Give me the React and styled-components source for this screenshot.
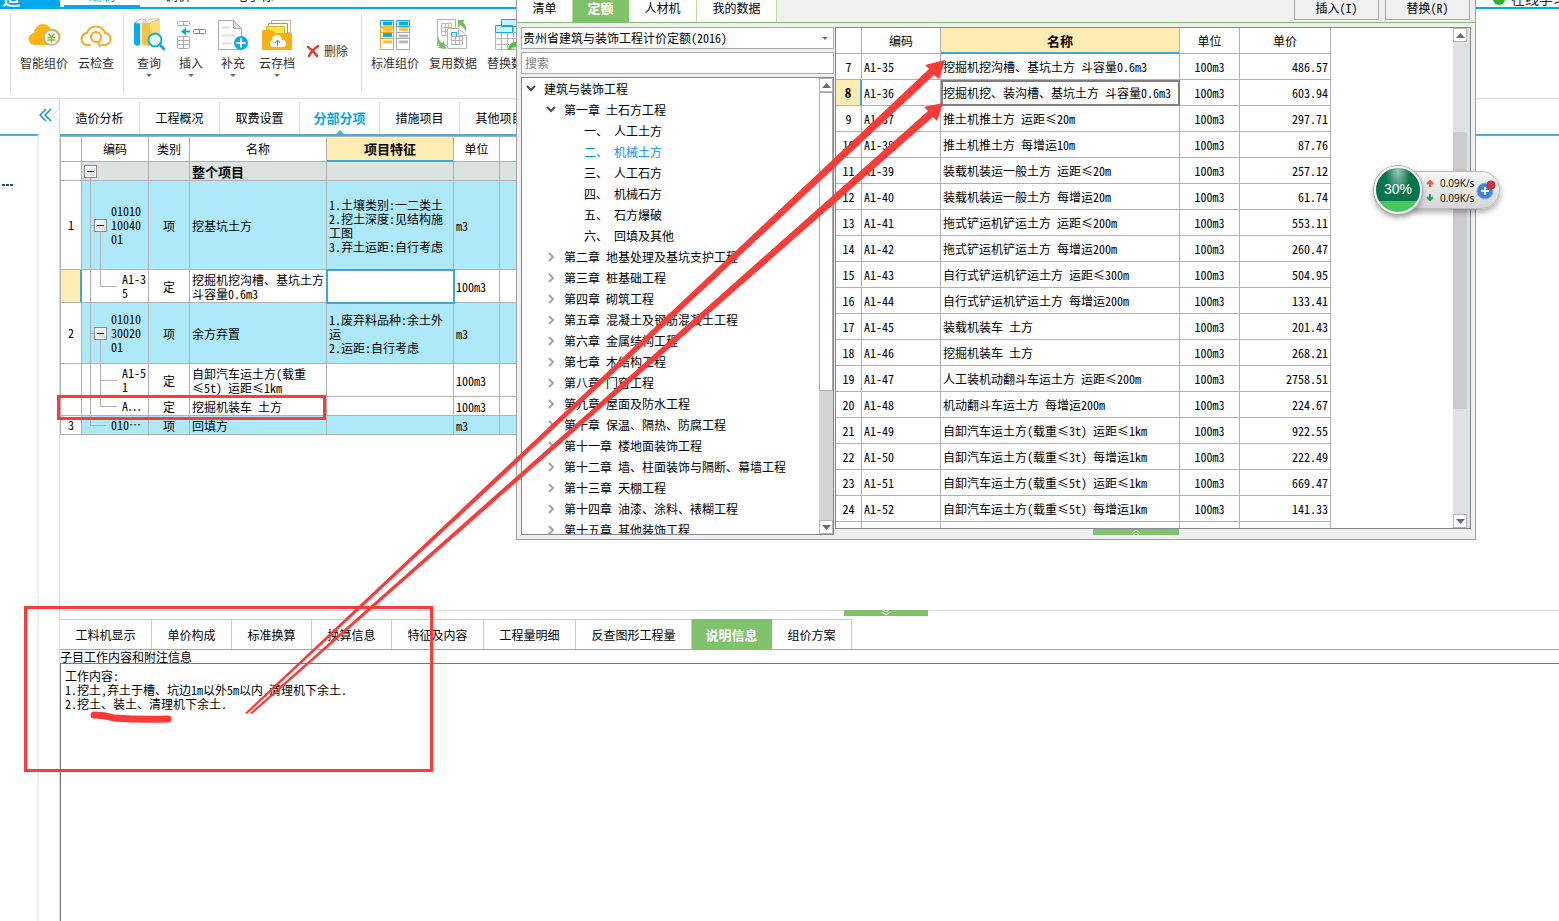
import { useState } from 'react';
import styled, { createGlobalStyle, css } from 'styled-components';

const colors = {
  blue: '#00a8ec',
  line: '#41b2e0',
  select: '#3fa7d6',
  green: '#80c269',
  lightGreen: '#b4e29c',
  grid: '#b0b0b0',
  yellow: '#ffecb3',
  item: '#aee9fa',
  mark: '#fc3a37',
};

const mainTabs = ['造价分析', '工程概况', '取费设置', '分部分项', '措施项目', '其他项目'];

const billRows = [
  { kind: 'root', no: '', code: '', type: '', name: '整个项目', feature: '', unit: '', height: 19 },
  {
    kind: 'item',
    no: '1',
    code: '01010\n10040\n01',
    type: '项',
    name: '挖基坑土方',
    feature: '1.土壤类别:一二类土\n2.挖土深度:见结构施\n工图\n3.弃土运距:自行考虑',
    unit: 'm3',
    height: 89,
  },
  {
    kind: 'leafEnd',
    no: '',
    code: 'A1-3\n5',
    type: '定',
    name: '挖掘机挖沟槽、基坑土方\n斗容量0.6m3',
    feature: '',
    unit: '100m3',
    height: 33,
    current: true,
  },
  {
    kind: 'item',
    no: '2',
    code: '01010\n30020\n01',
    type: '项',
    name: '余方弃置',
    feature: '1.废弃料品种:余土外\n运\n2.运距:自行考虑',
    unit: 'm3',
    height: 61,
  },
  {
    kind: 'leaf',
    no: '',
    code: 'A1-5\n1',
    type: '定',
    name: '自卸汽车运土方(载重\n≤5t) 运距≤1km',
    feature: '',
    unit: '100m3',
    height: 33,
  },
  { kind: 'leafEnd', no: '', code: 'A⋯', type: '定', name: '挖掘机装车 土方', feature: '', unit: '100m3', height: 19 },
  { kind: 'itemEnd', no: '3', code: '010⋯', type: '项', name: '回填方', feature: '', unit: 'm3', height: 19 },
];

const tree = [
  { level: 0, text: '建筑与装饰工程', open: true },
  { level: 1, text: '第一章 土石方工程', open: true },
  { level: 2, text: '一、 人工土方' },
  { level: 2, text: '二、 机械土方', active: true },
  { level: 2, text: '三、 人工石方' },
  { level: 2, text: '四、 机械石方' },
  { level: 2, text: '五、 石方爆破' },
  { level: 2, text: '六、 回填及其他' },
  { level: 1, text: '第二章 地基处理及基坑支护工程' },
  { level: 1, text: '第三章 桩基础工程' },
  { level: 1, text: '第四章 砌筑工程' },
  { level: 1, text: '第五章 混凝土及钢筋混凝土工程' },
  { level: 1, text: '第六章 金属结构工程' },
  { level: 1, text: '第七章 木结构工程' },
  { level: 1, text: '第八章 门窗工程' },
  { level: 1, text: '第九章 屋面及防水工程' },
  { level: 1, text: '第十章 保温、隔热、防腐工程' },
  { level: 1, text: '第十一章 楼地面装饰工程' },
  { level: 1, text: '第十二章 墙、柱面装饰与隔断、幕墙工程' },
  { level: 1, text: '第十三章 天棚工程' },
  { level: 1, text: '第十四章 油漆、涂料、裱糊工程' },
  { level: 1, text: '第十五章 其他装饰工程' },
];

const quotas = [
  [7, 'A1-35', '挖掘机挖沟槽、基坑土方 斗容量0.6m3', '486.57'],
  [8, 'A1-36', '挖掘机挖、装沟槽、基坑土方 斗容量0.6m3', '603.94'],
  [9, 'A1-37', '推土机推土方 运距≤20m', '297.71'],
  [10, 'A1-38', '推土机推土方 每增运10m', '87.76'],
  [11, 'A1-39', '装载机装运一般土方 运距≤20m', '257.12'],
  [12, 'A1-40', '装载机装运一般土方 每增运20m', '61.74'],
  [13, 'A1-41', '拖式铲运机铲运土方 运距≤200m', '553.11'],
  [14, 'A1-42', '拖式铲运机铲运土方 每增运200m', '260.47'],
  [15, 'A1-43', '自行式铲运机铲运土方 运距≤300m', '504.95'],
  [16, 'A1-44', '自行式铲运机铲运土方 每增运200m', '133.41'],
  [17, 'A1-45', '装载机装车 土方', '201.43'],
  [18, 'A1-46', '挖掘机装车 土方', '268.21'],
  [19, 'A1-47', '人工装机动翻斗车运土方 运距≤200m', '2758.51'],
  [20, 'A1-48', '机动翻斗车运土方 每增运200m', '224.67'],
  [21, 'A1-49', '自卸汽车运土方(载重≤3t) 运距≤1km', '922.55'],
  [22, 'A1-50', '自卸汽车运土方(载重≤3t) 每增运1km', '222.49'],
  [23, 'A1-51', '自卸汽车运土方(载重≤5t) 运距≤1km', '669.47'],
  [24, 'A1-52', '自卸汽车运土方(载重≤5t) 每增运1km', '141.33'],
];

const detailTabs = [
  ['工料机显示', 92],
  ['单价构成', 80],
  ['标准换算', 80],
  ['换算信息', 80],
  ['特征及内容', 92],
  ['工程量明细', 92],
  ['反查图形工程量', 116],
  ['说明信息', 80],
  ['组价方案', 80],
];

const note = '工作内容:\n1.挖土,弃土于槽、坑边1m以外5m以内,清理机下余土.\n2.挖土、装土、清理机下余土.';

/* ---------- icons ---------- */

const SmartPriceIcon = () => (
  <svg width="34" height="34" viewBox="0 0 34 34">
    <path d="M8 27a6 6 0 0 1-1-12 9 9 0 0 1 17-4 7 7 0 0 1 3 16z" fill="#fdb515" />
    <circle cx="24.500" cy="19.500" r="7.500" fill="#fff" stroke="#b5b0a4" strokeWidth="1.500" />
    <path d="M21.500 15.500l3 3.500 3-3.500M20.500 19.500h8M20.500 22h8M24.500 19v5.500" fill="none" stroke="#7fc31c" strokeWidth="1.500" />
  </svg>
);

const CloudCheckIcon = () => (
  <svg width="34" height="34" viewBox="0 0 34 34" fill="none" stroke="#fca51f" strokeWidth="2">
    <path d="M11 27H9a6 6 0 0 1-1-12 9.500 9.500 0 0 1 18 0 6 6 0 0 1-1 12h-2" strokeLinecap="round" />
    <circle cx="17" cy="19" r="5" />
    <path d="M19 24l2 4" strokeLinecap="round" />
  </svg>
);

const QueryIcon = () => (
  <svg width="34" height="34" viewBox="0 0 34 34">
    <path d="M2 5l6-4v26l-3 1-3-2z" fill="#09aee9" />
    <path d="M3 5l5-4 6 1-5 4z" fill="#fff" stroke="#7b9ead" strokeWidth=".7" />
    <path d="M10 6l8-1v23l-8-1z" fill="#f6c348" />
    <path d="M18 5l10-4v24l-10 3z" fill="#ffdc70" />
    <path d="M11 6l7-5h9l-9 4z" fill="#fff" stroke="#bda76c" strokeWidth=".7" />
    <circle cx="23" cy="22" r="6.500" fill="#e4f7fd" stroke="#13a9e2" strokeWidth="2" />
    <path d="M28 27l4 4" stroke="#13a9e2" strokeWidth="3" strokeLinecap="round" />
  </svg>
);

const InsertIcon = () => (
  <svg width="34" height="34" viewBox="0 0 34 34" fill="none" stroke="#aaa">
    <rect x="3.500" y="3.500" width="12" height="4" rx="1" />
    <path d="M9.500 3.500v4" />
    <rect x="3.500" y="18.500" width="12" height="12" rx="1" />
    <path d="M3.500 22.500h12M3.500 26.500h12M9.500 18.500v12" />
    <rect x="19.500" y="11.500" width="12" height="4" rx="1" stroke="#12a9e5" />
    <path d="M25.500 11.500v4" stroke="#12a9e5" />
    <path d="M7 13.500l5-4v3h4v2h-4v3z" fill="#00a8ec" stroke="none" />
  </svg>
);

const AppendIcon = () => (
  <svg width="34" height="34" viewBox="0 0 34 34">
    <path d="M2.500 2.500h15l8 8v21h-23z" fill="#fff" stroke="#aaa" />
    <path d="M17.500 2.500v8h8z" fill="#ddd" stroke="#aaa" />
    <path d="M6 9.500h8M6 17.500h14M6 25.500h10" stroke="#e0e0e0" strokeWidth="2" />
    <circle cx="25" cy="25" r="7" fill="#08a9ed" />
    <path d="M20.500 25h9M25 20.500v9" stroke="#fff" strokeWidth="2" />
  </svg>
);

const CloudFolderIcon = () => (
  <svg width="34" height="34" viewBox="0 0 34 34">
    <path d="M11.500 2.500h19v12h-19z" fill="#fff" stroke="#c5b79b" />
    <path d="M8.500 5.500h19v10h-19z" fill="#fff" stroke="#8cae3b" />
    <path d="M6.500 8.500h18v9h-18z" fill="#ffe54b" stroke="#e3ad22" />
    <path d="M2 13a1 1 0 0 1 1-1h9l3 3h16a1 1 0 0 1 1 1v15a1 1 0 0 1-1 1H3a1 1 0 0 1-1-1z" fill="#fbaf14" />
    <path d="M12 29a4 4 0 0 1 0-7 5 5 0 0 1 10 0 3.500 3.500 0 0 1 1 7z" fill="#fff" />
    <path d="M17.500 28v-5M15 25l2.500-3 2.500 3" fill="none" stroke="#25a143" />
  </svg>
);

const StandardIcon = () => (
  <svg width="34" height="34" viewBox="0 0 34 34" fill="none">
    <path d="M2.500 2.500h13v6h-13z" stroke="#12a9e5" />
    <path d="M2.500 9v22.500h13V9" stroke="#eca52b" />
    <path d="M5 5.500h9M5 17h9" stroke="#09aee9" strokeWidth="4" />
    <path d="M3 9.500h12M5 12h9M5 24h9" stroke="#ffc132" strokeWidth="3" />
    <path d="M2.500 14.500h13M2.500 20.500h13" stroke="#eca52b" />
    <path d="M18.500 2.500h13v6h-13z" stroke="#12a9e5" />
    <path d="M18.500 9v22.500h13V9" stroke="#aaa" />
    <path d="M21 5.500h9" stroke="#09aee9" strokeWidth="4" />
    <path d="M21 11h9" stroke="#ffc132" strokeWidth="4" />
    <path d="M21 18h9M21 24h9" stroke="#b6b6b6" strokeWidth="3" />
    <path d="M18.500 14.500h13M18.500 20.500h13" stroke="#aaa" />
  </svg>
);

const ReuseIcon = () => (
  <svg width="34" height="34" viewBox="0 0 34 34" fill="none">
    <path d="M1.500 1.500h18v26h-18z" fill="#fff" stroke="#b3b3b3" />
    <path d="M5.500 5.500h10v12h-10zM5.500 9.500h10M5.500 13.500h10M9.500 5.500v12M12.500 5.500v12" stroke="#efb64a" />
    <path d="M11.500 10.500h11l8 7v13h-19z" fill="#fff" stroke="#b3b3b3" />
    <path d="M22.500 10.500v7h8" stroke="#b3b3b3" />
    <path d="M15.500 14.500h5v4h-5z" fill="#c6effc" stroke="#12a9e5" />
    <path d="M15.500 18.500h11v8h-11zM15.500 22.500h11M19.500 18.500v8M23.500 18.500v8" stroke="#b3b3b3" />
    <path d="M22 2h7l-2 2q4 4 3 10-2-5-6-7l-2 3z" fill="#78bd62" />
    <path d="M2 18q1 5 4 7l2-2 2 8-8-1 2-2q-4-4-2-10z" fill="#78bd62" />
  </svg>
);

const ReplaceIcon = () => (
  <svg width="34" height="34" viewBox="0 0 34 34" fill="none">
    <path d="M1.500 8.500h28v23h-28zM1.500 14.500h28M1.500 20.500h28M1.500 26.500h28M7.500 8.500v23M13.500 8.500v23M19.500 8.500v23" fill="#fff" stroke="#b3b3b3" />
    <path d="M7.500 1.500h22v7h-22zM1.500 7.500h17v7h-17z" fill="#c6f2fd" stroke="#12a9e5" />
    <path d="M14 32q1-9 9-8v-3l8 6-8 6v-4q-5-1-6 3z" fill="#4cc52e" />
  </svg>
);

const DeleteIcon = () => (
  <svg width="14" height="14" viewBox="0 0 14 14">
    <path d="M2 3q5 3 9 9M12 2q-6 4-9 10" fill="none" stroke="#e8372c" strokeWidth="2.500" strokeLinecap="round" />
  </svg>
);

const Triangle = ({ up }) => (
  <svg width="9" height="5" viewBox="0 0 9 5">
    <path d={up ? 'M0 5L4.500 0 9 5z' : 'M0 0L4.500 5 9 0z'} fill="#666b7a" />
  </svg>
);

const Caret = () => (
  <svg width="6" height="3" viewBox="0 0 6 3">
    <path d="M0 0h6L3 3z" fill="#6b6f7c" />
  </svg>
);

const Chevron = ({ open }) => (
  <svg width="10" height="10" viewBox="0 0 10 10" fill="none" strokeWidth="2">
    {open ? <path d="M1 2l4 4 4-4" stroke="#4a4a4a" /> : <path d="M3 1l4 4-4 4" stroke="#a3a3a3" />}
  </svg>
);

const DoubleChevron = ({ up }) => (
  <svg width="10" height="6" viewBox="0 0 10 6" fill="none" stroke="#e8f6e2">
    <path d={up ? 'M1 4l4-3 4 3M2 6l3-2 3 2' : 'M1 2l4 3 4-3M2 0l3 2 3-2'} />
  </svg>
);

const RateArrow = ({ down }) => (
  <svg width="8" height="8" viewBox="0 0 8 8" fill="none" strokeWidth="2">
    {down ? <path d="M4 0v6M1 3l3 3 3-3" stroke="#22a052" /> : <path d="M4 8V2M1 5l3-3 3 3" stroke="#e9553b" />}
  </svg>
);

/* ---------- pieces ---------- */

const Ribbon = () => (
  <RibbonBar>
    <RibbonGroup $gap={10}>
      <Tool $width={48}><SmartPriceIcon />智能组价</Tool>
      <Tool $width={36}><CloudCheckIcon />云检查</Tool>
    </RibbonGroup>
    <RibbonGroup $gap={6}>
      <Tool $width={36}><QueryIcon />查询<Caret /></Tool>
      <Tool $width={36}><InsertIcon />插入<Caret /></Tool>
      <Tool $width={36}><AppendIcon />补充<Caret /></Tool>
      <Tool $width={40}><CloudFolderIcon />云存档<Caret /></Tool>
      <InlineTool><DeleteIcon />删除</InlineTool>
    </RibbonGroup>
    <RibbonGroup $gap={10}>
      <Tool $width={48}><StandardIcon />标准组价</Tool>
      <Tool $width={48}><ReuseIcon />复用数据</Tool>
      <Tool $width={48}><ReplaceIcon />替换数据</Tool>
    </RibbonGroup>
  </RibbonBar>
);

const BillTable = () => (
  <Grid $width={560}>
    <colgroup>
      <col width="22" />
      <col width="67" />
      <col width="41" />
      <col width="137" />
      <col width="127" />
      <col width="46" />
      <col />
    </colgroup>
    <thead>
      <Row $height={26}>
        <Head />
        <Head>编码</Head>
        <Head>类别</Head>
        <Head>名称</Head>
        <Head $active>项目特征</Head>
        <Head>单位</Head>
        <Head />
      </Row>
    </thead>
    <tbody>
      {billRows.map((row, index) => (
        <Row key={index} $height={row.height} $kind={row.kind}>
          <NumberCell $current={row.current}>{row.no}</NumberCell>
          <CodeCell $kind={row.kind}>
            <Code $kind={row.kind}>
              {(row.kind === 'root' || row.kind === 'item') && <Expander type="button" aria-label="折叠" />}
              {row.code}
            </Code>
          </CodeCell>
          <BillCell $center>{row.type}</BillCell>
          <BillCell $bold={row.kind === 'root'}>{row.name}</BillCell>
          <BillCell $focus={row.current}>{row.feature}</BillCell>
          <BillCell>{row.unit}</BillCell>
          <BillCell />
        </Row>
      ))}
    </tbody>
  </Grid>
);

const QuotaTable = () => (
  <Grid $width={495} $inner>
    <colgroup>
      <col width="26" />
      <col width="79" />
      <col width="239" />
      <col width="60" />
      <col width="91" />
    </colgroup>
    <thead>
      <Row $height={26}>
        <Head />
        <Head>编码</Head>
        <Head $active>名称</Head>
        <Head>单位</Head>
        <Head>单价</Head>
      </Row>
    </thead>
    <tbody>
      {quotas.map(([no, code, name, price]) => (
        <Row key={no} $height={26}>
          <NumberCell $current={no === 8}>{no}</NumberCell>
          <Cell>{code}</Cell>
          <Cell $picked={no === 8}>{name}</Cell>
          <Cell $center>100m3</Cell>
          <Cell $right>{price}</Cell>
        </Row>
      ))}
      <Row $height={26}>
        <Cell />
        <Cell />
        <Cell />
        <Cell />
        <Cell />
      </Row>
    </tbody>
  </Grid>
);

const QuotaDialog = () => {
  const [keyword, setKeyword] = useState('');

  return (
    <Dialog role="dialog" aria-label="查询">
      <DialogBar>
        <DialogTab $width={56}>清单</DialogTab>
        <DialogTab $width={56} $active>定额</DialogTab>
        <DialogTab $width={68}>人材机</DialogTab>
        <DialogTab $width={80}>我的数据</DialogTab>
        <DialogActions>
          <DialogButton type="button">插入(I)</DialogButton>
          <DialogButton type="button">替换(R)</DialogButton>
        </DialogActions>
      </DialogBar>
      <DialogBody>
        <Library>
          <SelectBox>
            <select aria-label="定额库">
              <option>贵州省建筑与装饰工程计价定额(2016)</option>
            </select>
            <Caret />
          </SelectBox>
          <SearchInput
            type="text"
            aria-label="搜索"
            placeholder="搜索"
            value={keyword}
            onChange={event => setKeyword(event.currentTarget.value)}
          />
          <TreeBox>
            <TreeList>
              {tree.map(node => (
                <TreeItem key={node.text} $level={node.level} $active={node.active}>
                  {node.level < 2 && <Chevron open={node.open} />}
                  {node.text}
                </TreeItem>
              ))}
            </TreeList>
            <ScrollBar>
              <ScrollButton type="button" aria-label="向上"><Triangle up /></ScrollButton>
              <TreeThumb />
              <ScrollButton type="button" aria-label="向下"><Triangle /></ScrollButton>
            </ScrollBar>
          </TreeBox>
        </Library>
        <QuotaSide>
          <QuotaBox>
            <QuotaTable />
            <ScrollBar $light>
              <ScrollButton type="button" aria-label="向上"><Triangle up /></ScrollButton>
              <QuotaThumb />
              <ScrollButton type="button" aria-label="向下"><Triangle /></ScrollButton>
            </ScrollBar>
          </QuotaBox>
          <Handle type="button" aria-label="展开" $width={86} $inDialog><DoubleChevron up /></Handle>
        </QuotaSide>
      </DialogBody>
    </Dialog>
  );
};

const NetMonitor = () => (
  <Monitor>
    <Ball>30%</Ball>
    <Rates>
      <span><RateArrow />0.09K/s</span>
      <span><RateArrow down />0.09K/s</span>
    </Rates>
    <svg width="20" height="22" viewBox="0 0 20 22">
      <circle cx="9" cy="12" r="8" fill="#3b84e2" stroke="#8db4e8" />
      <path d="M5 12h8M9 8v8" stroke="#fff" strokeWidth="2" />
      <circle cx="15" cy="6" r="4" fill="#dc3435" stroke="#b3282b" />
    </svg>
  </Monitor>
);

const Marks = () => (
  <MarkLayer width="960" height="790" viewBox="0 0 960 790">
    <g fill={colors.mark}>
      <path d="M245 713L929 69 925 65 945 60 939 79 934 75 247 714z" />
      <path d="M250 713L928 111 924 107 943 103 937 121 933 117 252 714z" />
    </g>
    <g fill="none" stroke={colors.mark} strokeWidth="3">
      <rect x="58.500" y="396.500" width="266" height="22" />
      <rect x="25.500" y="607.500" width="406" height="163" />
      <path d="M94 715q10 0 20 3 26 2 54 1" strokeWidth="7" strokeLinecap="round" />
    </g>
  </MarkLayer>
);

const App = () => {
  const [tab, setTab] = useState('分部分项');
  const [detail, setDetail] = useState('说明信息');

  return (
    <Page>
      <GlobalStyle />
      <TopBar>
        <Brand>造</Brand>
        <TopTab href="#edit" $active>编制</TopTab>
        <TopTab href="#adjust">调价</TopTab>
        <TopTab href="#bid">电子标</TopTab>
        <Online href="#study"><OnlineDot />在线学习</Online>
      </TopBar>
      <Ribbon />
      <Body>
        <SidePanel>
          <Dots><span /><span /><span /></Dots>
        </SidePanel>
        <Gutter>
          <Collapse type="button" aria-label="收起">
            <svg width="20" height="26" viewBox="0 0 20 26" fill="none">
              <path d="M7 7l-6 6 6 6M12 7l-6 6 6 6" stroke="#1596c8" strokeWidth="1.500" />
              <path d="M20 1v6l-6 6 6 6v6" stroke="#ddd" />
            </svg>
          </Collapse>
        </Gutter>
        <Main>
          <Tabs>
            {mainTabs.map(name => (
              <Tab key={name} type="button" $active={tab === name} onClick={() => setTab(name)}>
                {name}
              </Tab>
            ))}
          </Tabs>
          <Bill>
            <BillTable />
          </Bill>
          <Details>
            <Handle type="button" aria-label="收起" $width={84}><DoubleChevron /></Handle>
            <DetailTabs>
              {detailTabs.map(([name, width]) => (
                <DetailTab
                  key={name}
                  type="button"
                  $width={width}
                  $active={detail === name}
                  onClick={() => setDetail(name)}
                >
                  {name}
                </DetailTab>
              ))}
            </DetailTabs>
            <NoteLabel htmlFor="note">子目工作内容和附注信息</NoteLabel>
            <Note id="note" defaultValue={note} spellCheck={false} />
          </Details>
        </Main>
      </Body>
      <QuotaDialog />
      <NetMonitor />
      <Marks />
    </Page>
  );
};

/* ---------- styles ---------- */

const GlobalStyle = createGlobalStyle`
  * {
    box-sizing: border-box;
  }

  body {
    margin: 0;
    background-color: #fff;
  }

  body, button, input, select, textarea {
    font-family: "Noto Sans Mono CJK SC", "Noto Sans CJK SC", sans-serif;
    font-size: 12px;
    line-height: 14px;
    color: #000;
  }

  button {
    padding: 0;
    border: 0;
    background: none;
    white-space: nowrap;
  }

  svg {
    display: block;
    flex: none;
  }
`;

const bold = css`
  font-size: 13px;
  font-weight: bold;
`;

const Page = styled.div`
  position: relative;
  display: flex;
  flex-direction: column;
  min-height: 100vh;
  overflow: hidden;
`;

const TopBar = styled.header`
  display: flex;
  align-items: flex-end;
  height: 9px;
  overflow: hidden;
  border-bottom: 2px solid ${colors.blue};
`;

const Brand = styled.strong`
  width: 60px;
  margin-right: 4px;
  padding-left: 2px;
  background-color: ${colors.blue};
  color: #fff;
  font-size: 18px;
  line-height: 20px;
`;

const TopTab = styled.a`
  width: 76px;
  height: 20px;
  border-bottom: 2px solid ${props => (props.$active ? colors.blue : 'transparent')};
  color: ${props => (props.$active ? colors.blue : '#222')};
  font-size: 13px;
  line-height: 16px;
  text-align: center;
  text-decoration: none;
`;

const Online = styled.a`
  display: flex;
  align-items: flex-end;
  gap: 6px;
  width: 66px;
  height: 20px;
  margin-left: auto;
  padding-bottom: 2px;
  overflow: hidden;
  color: #222;
  font-size: 14px;
  white-space: nowrap;
  text-decoration: none;
`;

const OnlineDot = styled.span`
  flex: none;
  width: 12px;
  height: 12px;
  border-radius: 6px;
  background-color: #25b42a;
`;

const RibbonBar = styled.nav`
  display: flex;
  height: 90px;
  padding: 5px 0 5px 10px;
  border-bottom: 1px solid #dcdcdc;
`;

const RibbonGroup = styled.div`
  display: flex;
  align-items: flex-start;
  gap: ${props => props.$gap}px;
  height: 79px;
  padding: 4px 9px 0;
  border-left: 1px solid #dcdcdc;

  &:nth-child(2) {
    padding: 4px 13px 0 7px;
  }
`;

const Tool = styled.button`
  display: flex;
  flex-direction: column;
  align-items: center;
  gap: 4px;
  width: ${props => props.$width}px;
  color: #333;
`;

const InlineTool = styled.button`
  display: flex;
  align-items: center;
  gap: 4px;
  height: 66px;
  margin-left: 3px;
  color: #333;
`;

const Body = styled.div`
  display: flex;
  flex: 1;
`;

const SidePanel = styled.aside`
  width: 39px;
  margin-top: 35px;
  border-top: 2px solid ${colors.line};
  border-right: 2px solid #eee;
`;

const Dots = styled.div`
  display: flex;
  gap: 1px;
  padding: 48px 2px;

  span {
    width: 3px;
    height: 2px;
    background-color: #1d4f8f;
  }
`;

const Gutter = styled.div`
  width: 20px;
  padding-top: 3px;
`;

const Collapse = styled.button`
  display: block;
`;

const Main = styled.main`
  display: flex;
  flex: 1;
  flex-direction: column;
  min-width: 0;
  border-left: 1px solid #dcdcdc;
`;

const Tabs = styled.div`
  display: flex;
  align-items: flex-end;
  height: 37px;
  border-bottom: 2px solid ${colors.line};
`;

const Tab = styled.button`
  position: relative;
  width: 80px;
  height: 32px;
  border-right: 1px solid #dcdcdc;

  ${props =>
    props.$active &&
    css`
      ${bold}
      color: ${colors.blue};

      &::after {
        content: '';
        position: absolute;
        bottom: 0;
        left: 36px;
        border: 4px solid transparent;
        border-top: 0;
        border-bottom-color: ${colors.line};
      }
    `}
`;

const Bill = styled.section`
  flex: 1;
`;

const Grid = styled.table`
  width: ${props => props.$width}px;
  table-layout: fixed;
  border-collapse: separate;
  border-spacing: 0;

  ${props =>
    !props.$inner &&
    css`
      thead th {
        border-top: 1px solid ${colors.grid};
      }

      tr > :first-child {
        border-left: 1px solid ${colors.grid};
      }
    `}
`;

const rowColors = {
  root: '#dae3df',
  item: colors.item,
  itemEnd: colors.item,
};

const Row = styled.tr`
  height: ${props => props.$height}px;
  background-color: ${props => rowColors[props.$kind] || '#fff'};
`;

const Head = styled.th`
  padding: 0;
  border-right: 1px solid ${colors.grid};
  border-bottom: 1px solid ${colors.grid};
  font-weight: normal;

  ${props =>
    props.$active &&
    css`
      ${bold}
      border-bottom-color: ${colors.select};
      box-shadow: inset 0 -1px ${colors.select};
      background-color: ${colors.yellow};
    `}
`;

const Cell = styled.td`
  padding: 0 2px;
  border-right: 1px solid ${colors.grid};
  border-bottom: 1px solid ${colors.grid};
  text-align: ${props => (props.$center ? 'center' : props.$right ? 'right' : 'left')};
  white-space: pre;

  ${props => props.$bold && bold}

  ${props =>
    props.$focus &&
    css`
      outline: 2px solid ${colors.select};
      outline-offset: -1px;
    `}

  ${props =>
    props.$picked &&
    css`
      outline: 2px solid #808080;
      outline-offset: -2px;
    `}
`;

const BillCell = styled(Cell)`
  padding: 2px 2px 0;
`;

const NumberCell = styled(Cell)`
  padding: 0;
  background-color: #fff;
  text-align: center;

  ${props =>
    props.$current &&
    css`
      ${bold}
      border-right: 2px solid ${colors.select};
      background-color: ${colors.yellow};
    `}
`;

// each guide is a 1px stripe: [x, y, width, height]
const guides = {
  root: [['8px', '100%', '1px', '50%']],
  item: [
    ['8px', '0', '1px', '100%'],
    ['8px', '50%', '6px', '1px'],
    ['18px', '100%', '1px', '50%'],
  ],
  itemEnd: [
    ['8px', '0', '1px', '50%'],
    ['8px', '50%', '16px', '1px'],
  ],
  leaf: [
    ['8px', '0', '1px', '100%'],
    ['18px', '0', '1px', '100%'],
    ['18px', '50%', '17px', '1px'],
  ],
  leafEnd: [
    ['8px', '0', '1px', '100%'],
    ['18px', '0', '1px', '50%'],
    ['18px', '50%', '17px', '1px'],
  ],
};

const CodeCell = styled(Cell)`
  padding: 0;
  background-image: ${props =>
    guides[props.$kind].map(() => `linear-gradient(${colors.grid}, ${colors.grid})`).join(', ')};
  background-position: ${props => guides[props.$kind].map(([x, y]) => `${x} ${y}`).join(', ')};
  background-size: ${props => guides[props.$kind].map(([, , w, h]) => `${w} ${h}`).join(', ')};
  background-repeat: no-repeat;
`;

const indents = { root: 2, item: 12, itemEnd: 29, leaf: 40, leafEnd: 40 };

const Code = styled.div`
  display: flex;
  align-items: center;
  gap: 4px;
  padding-left: ${props => indents[props.$kind]}px;
`;

const Expander = styled.button`
  flex: none;
  width: 13px;
  height: 13px;
  border: 1px solid #888;
  background: linear-gradient(#222, #222) center / 7px 1px no-repeat, linear-gradient(135deg, #fff, #d4d6dc);
  box-shadow: inset 0 0 0 1px #fff;
`;

const Details = styled.section`
  display: flex;
  flex: 0 0 311px;
  flex-direction: column;
  border-top: 1px solid #dcdcdc;
`;

const Handle = styled.button`
  display: flex;
  justify-content: center;
  flex: none;
  width: ${props => props.$width}px;
  height: 6px;
  margin: -1px 0 3px 784px;
  background-color: ${colors.green};

  ${props =>
    props.$inDialog &&
    css`
      align-self: center;
      margin: 0 0 0 -34px;
    `}
`;

const DetailTabs = styled.div`
  display: flex;
  height: 31px;
  border-bottom: 1px solid ${colors.green};
`;

const DetailTab = styled.button`
  width: ${props => props.$width}px;
  border-top: 1px solid ${colors.lightGreen};
  border-right: 1px solid ${colors.lightGreen};

  ${props =>
    props.$active &&
    css`
      ${bold}
      border-color: ${colors.green};
      background-color: ${colors.green};
      color: #fff;
    `}
`;

const NoteLabel = styled.label`
  height: 13px;
`;

const Note = styled.textarea`
  flex: 1;
  width: 100%;
  padding: 5px 4px;
  border: 0;
  border-top: 1px solid #777;
  border-left: 1px solid #777;
  border-radius: 0;
  outline: none;
  resize: none;
`;

const Dialog = styled.section`
  position: absolute;
  top: 0;
  left: 516px;
  display: flex;
  flex-direction: column;
  width: 960px;
  height: 540px;
  border: 1px solid #a0a0a0;
  border-top: 0;
  background-color: #f0f0f0;
`;

const DialogBar = styled.div`
  display: flex;
  height: 23px;
  border-bottom: 1px solid ${colors.green};
`;

const DialogTab = styled.button`
  width: ${props => props.$width}px;
  padding-bottom: 6px;
  border-right: 1px solid ${colors.lightGreen};
  background-color: #fff;

  ${props =>
    props.$active &&
    css`
      ${bold}
      border-color: ${colors.green};
      background-color: ${colors.green};
      color: #fff;
    `}
`;

const DialogActions = styled.div`
  display: flex;
  gap: 6px;
  margin-left: auto;
  padding-right: 5px;
`;

const DialogButton = styled.button`
  width: 85px;
  height: 20px;
  padding-bottom: 3px;
  border: 1px solid #a8a8a8;
  border-top: 0;
`;

const DialogBody = styled.div`
  display: grid;
  flex: 1;
  grid-template-columns: 313px 1fr;
  gap: 1px;
  min-height: 0;
  padding: 4px;
`;

const Library = styled.div`
  display: flex;
  flex-direction: column;
  gap: 3px;
  min-height: 0;
`;

const SelectBox = styled.div`
  display: flex;
  align-items: center;
  flex: none;
  height: 22px;
  padding-right: 5px;
  border: 1px solid #a8a8a8;
  background-color: #fff;

  select {
    flex: 1;
    padding: 0 1px;
    border: 0;
    outline: none;
    appearance: none;
    background: none;
  }
`;

const SearchInput = styled.input`
  flex: none;
  height: 22px;
  padding: 0 3px 2px;
  border: 1px solid #a8a8a8;
  outline: none;
  background-color: #fff;

  &::placeholder {
    color: #808080;
  }
`;

const TreeBox = styled.div`
  display: flex;
  flex: 1;
  min-height: 0;
  border: 1px solid #828790;
  background-color: #fff;
`;

const TreeList = styled.ul`
  flex: 1;
  margin: 0;
  padding: 0;
  overflow: hidden;
  list-style: none;
`;

const TreeItem = styled.li`
  display: flex;
  align-items: center;
  gap: 8px;
  height: 21px;
  padding-left: ${props => [4, 24, 62][props.$level]}px;
  color: ${props => (props.$active ? '#0090ff' : '#000')};
  white-space: pre;
`;

const ScrollBar = styled.div`
  display: flex;
  flex: none;
  flex-direction: column;
  justify-content: space-between;
  width: ${props => (props.$light ? 17 : 14)}px;
  padding-right: ${props => (props.$light ? 3 : 0)}px;
  background-color: ${props => (props.$light ? '#e1e1e1' : '#d3d3d3')};
`;

const ScrollButton = styled.button`
  display: flex;
  align-items: center;
  justify-content: center;
  flex: none;
  height: 14px;
  border: 1px solid #b5b5b5;
  background-color: #fff;
`;

const TreeThumb = styled.div`
  flex: none;
  height: 299px;
  margin-bottom: auto;
  border: 1px solid #a8a8a8;
  background-color: #fff;
`;

const QuotaSide = styled.div`
  display: flex;
  flex-direction: column;
  min-height: 0;
`;

const QuotaBox = styled.div`
  display: flex;
  align-items: flex-start;
  justify-content: space-between;
  flex: 1;
  min-height: 0;
  overflow: hidden;
  border: 1px solid #828790;
  background-color: #fff;

  > ${ScrollBar} {
    height: 100%;
  }
`;

const QuotaThumb = styled.div`
  flex: none;
  height: 277px;
  margin: 90px 0 auto;
  border-radius: 2px;
  background-color: #cbcbcb;
`;

const Monitor = styled.aside`
  position: absolute;
  top: 171px;
  left: 1380px;
  display: flex;
  align-items: center;
  width: 120px;
  height: 38px;
  border: 1px solid #bbb;
  border-radius: 19px;
  background: linear-gradient(#f6f6f6, #d6d6d6);
  box-shadow: 0 3px 6px rgba(0, 0, 0, 0.35);
`;

const Ball = styled.div`
  flex: none;
  width: 48px;
  height: 48px;
  margin-left: -7px;
  border: 2px solid #f4f4f4;
  border-radius: 24px;
  background: radial-gradient(ellipse at 50% 8%, rgba(255, 255, 255, 0.6), transparent 40%),
    linear-gradient(#06744a 74%, #46c95c 74%);
  box-shadow: 0 0 0 1px #aaa, 0 3px 6px rgba(0, 0, 0, 0.4);
  color: #fff;
  font-family: "Liberation Sans", sans-serif;
  font-size: 14px;
  line-height: 42px;
  text-align: center;
`;

const Rates = styled.div`
  display: flex;
  flex-direction: column;
  gap: 1px;
  margin: 0 2px 0 4px;
  font-family: "Open Sans", sans-serif;
  font-size: 10px;

  span {
    display: flex;
    align-items: center;
    gap: 6px;
    white-space: nowrap;
  }
`;

const MarkLayer = styled.svg`
  position: absolute;
  top: 0;
  left: 0;
  pointer-events: none;
`;

export default App;
